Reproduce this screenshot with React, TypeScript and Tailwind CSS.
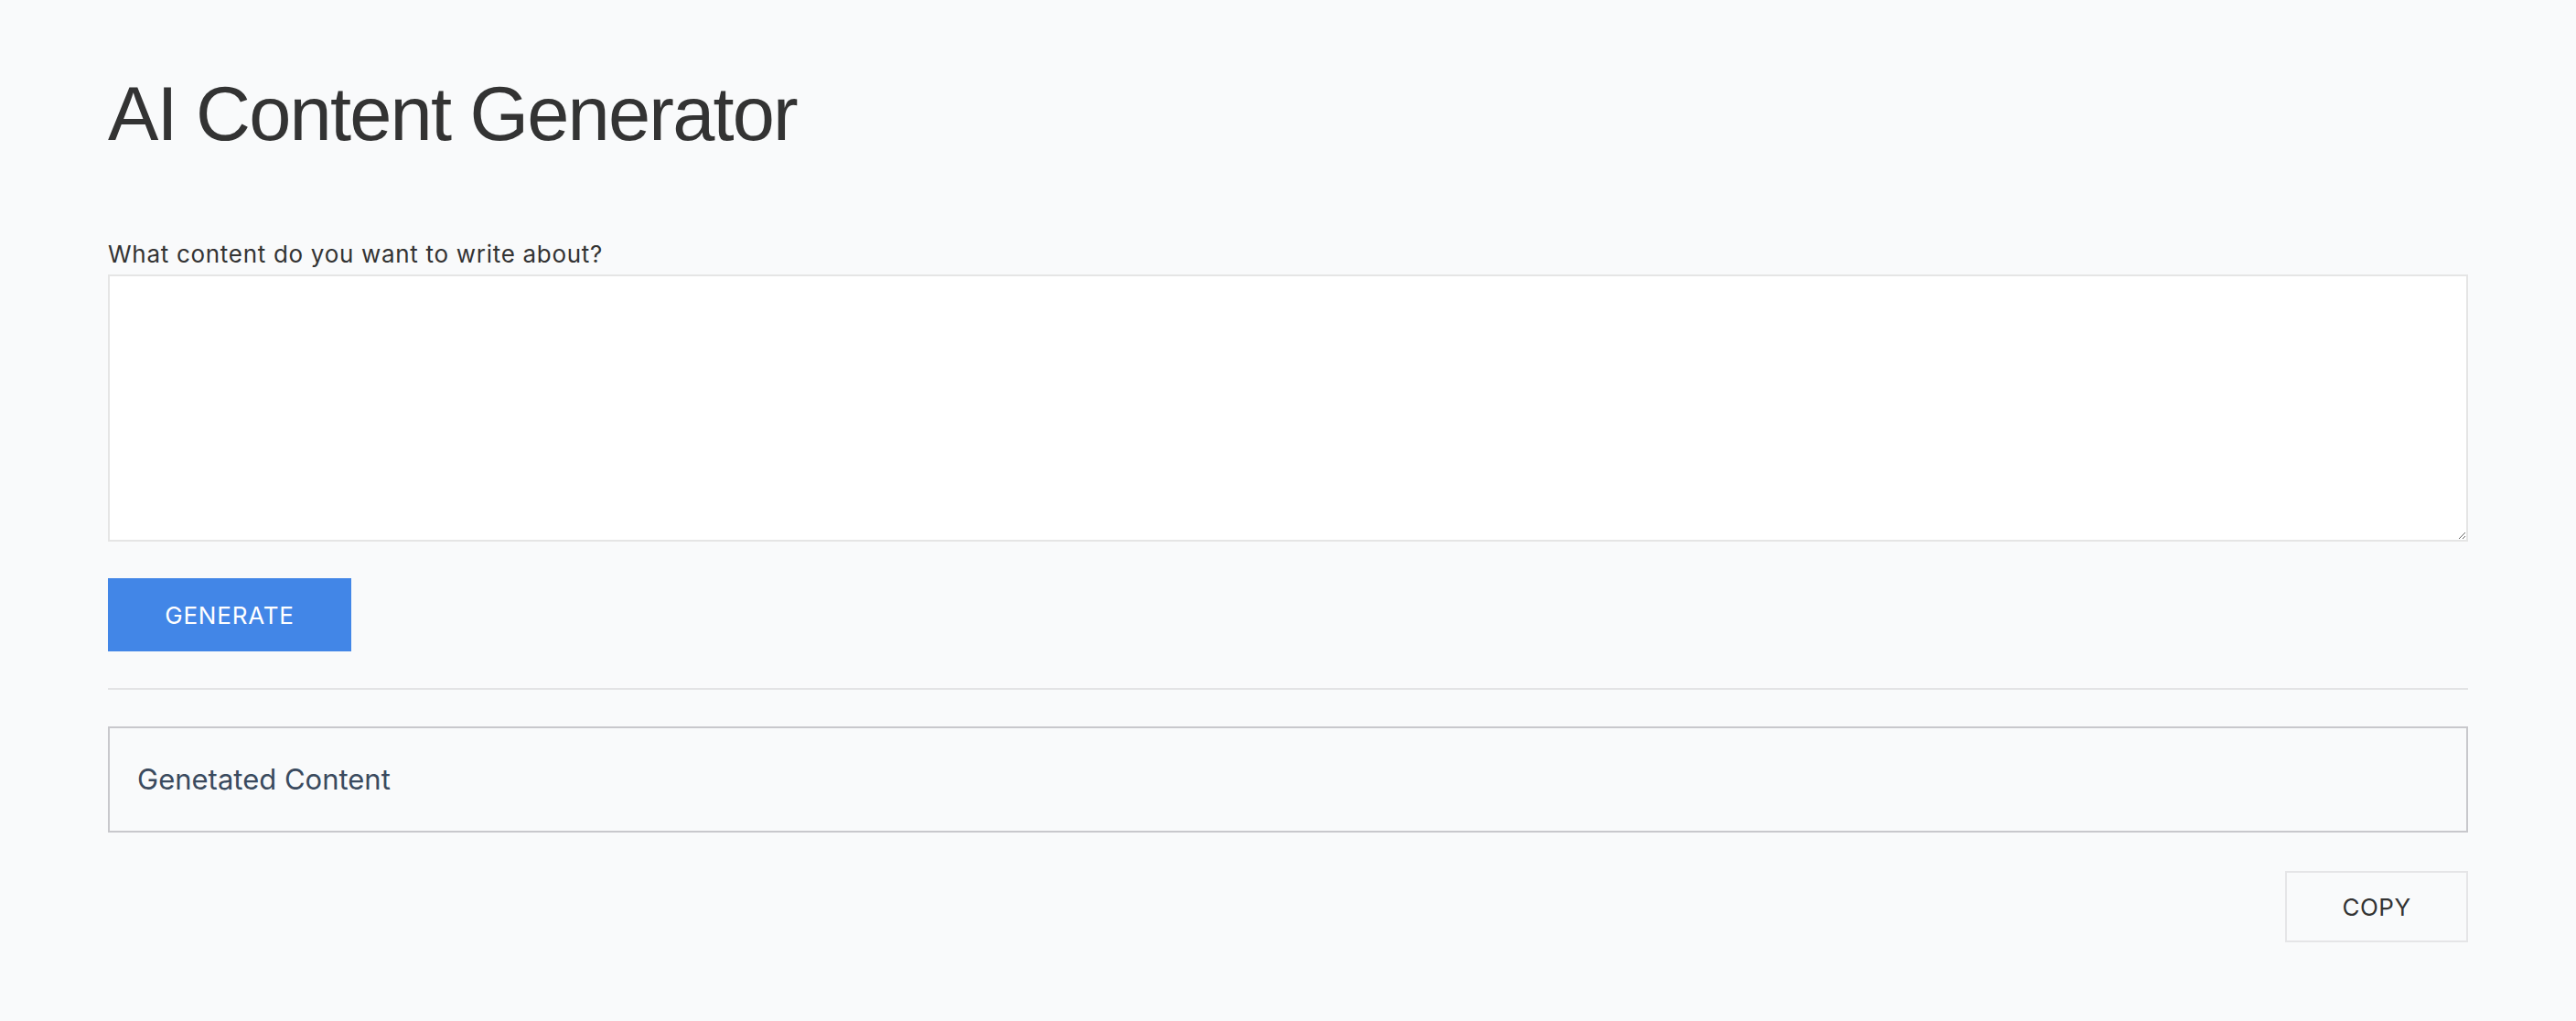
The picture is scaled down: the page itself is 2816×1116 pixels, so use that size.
import React, { useState } from 'react';

const App: React.FC = () => {
  const [prompt, setPrompt] = useState('');

  return (
    <div className="min-h-screen w-full bg-[#f9fafb] px-[118px] pt-[83px] pb-[40px] font-['Inter',sans-serif]">
      <h1 className="text-[83px] leading-[84px] tracking-[-1.8px] font-normal text-[#333333] font-['Liberation_Sans',Arial,sans-serif] whitespace-nowrap">
        AI Content Generator
      </h1>

      <label
        htmlFor="prompt"
        className="mt-[96px] block text-[26px] leading-[30px] tracking-[0.7px] text-[#333333] whitespace-nowrap"
      >
        What content do you want to write about?
      </label>
      <textarea
        id="prompt"
        value={prompt}
        onChange={(e) => setPrompt(e.target.value)}
        className="mt-[7px] block h-[292px] w-full border-2 border-[#e5e5e5] bg-white p-4 text-[26px] text-[#333333] outline-none"
      />

      <button className="mt-[40px] flex h-[80px] w-[266px] items-center justify-center bg-[#4286e7] text-[26px] tracking-[0.8px] text-white">
        GENERATE
      </button>

      <div className="mt-[40px] h-[2px] w-full bg-[#e3e3e5]" />

      <div className="mt-[40px] flex h-[116px] items-center border-2 border-[#c8c8cc] pl-[30px]">
        <span className="text-[31px] text-[#3a4a5e]">Genetated Content</span>
      </div>

      <div className="mt-[42px] flex justify-end">
        <button className="flex h-[78px] w-[200px] items-center justify-center border-2 border-[#e5e5e7] bg-[#f9fafb] text-[26px] tracking-[0.5px] text-[#333333]">
          COPY
        </button>
      </div>
    </div>
  );
};

export default App;
